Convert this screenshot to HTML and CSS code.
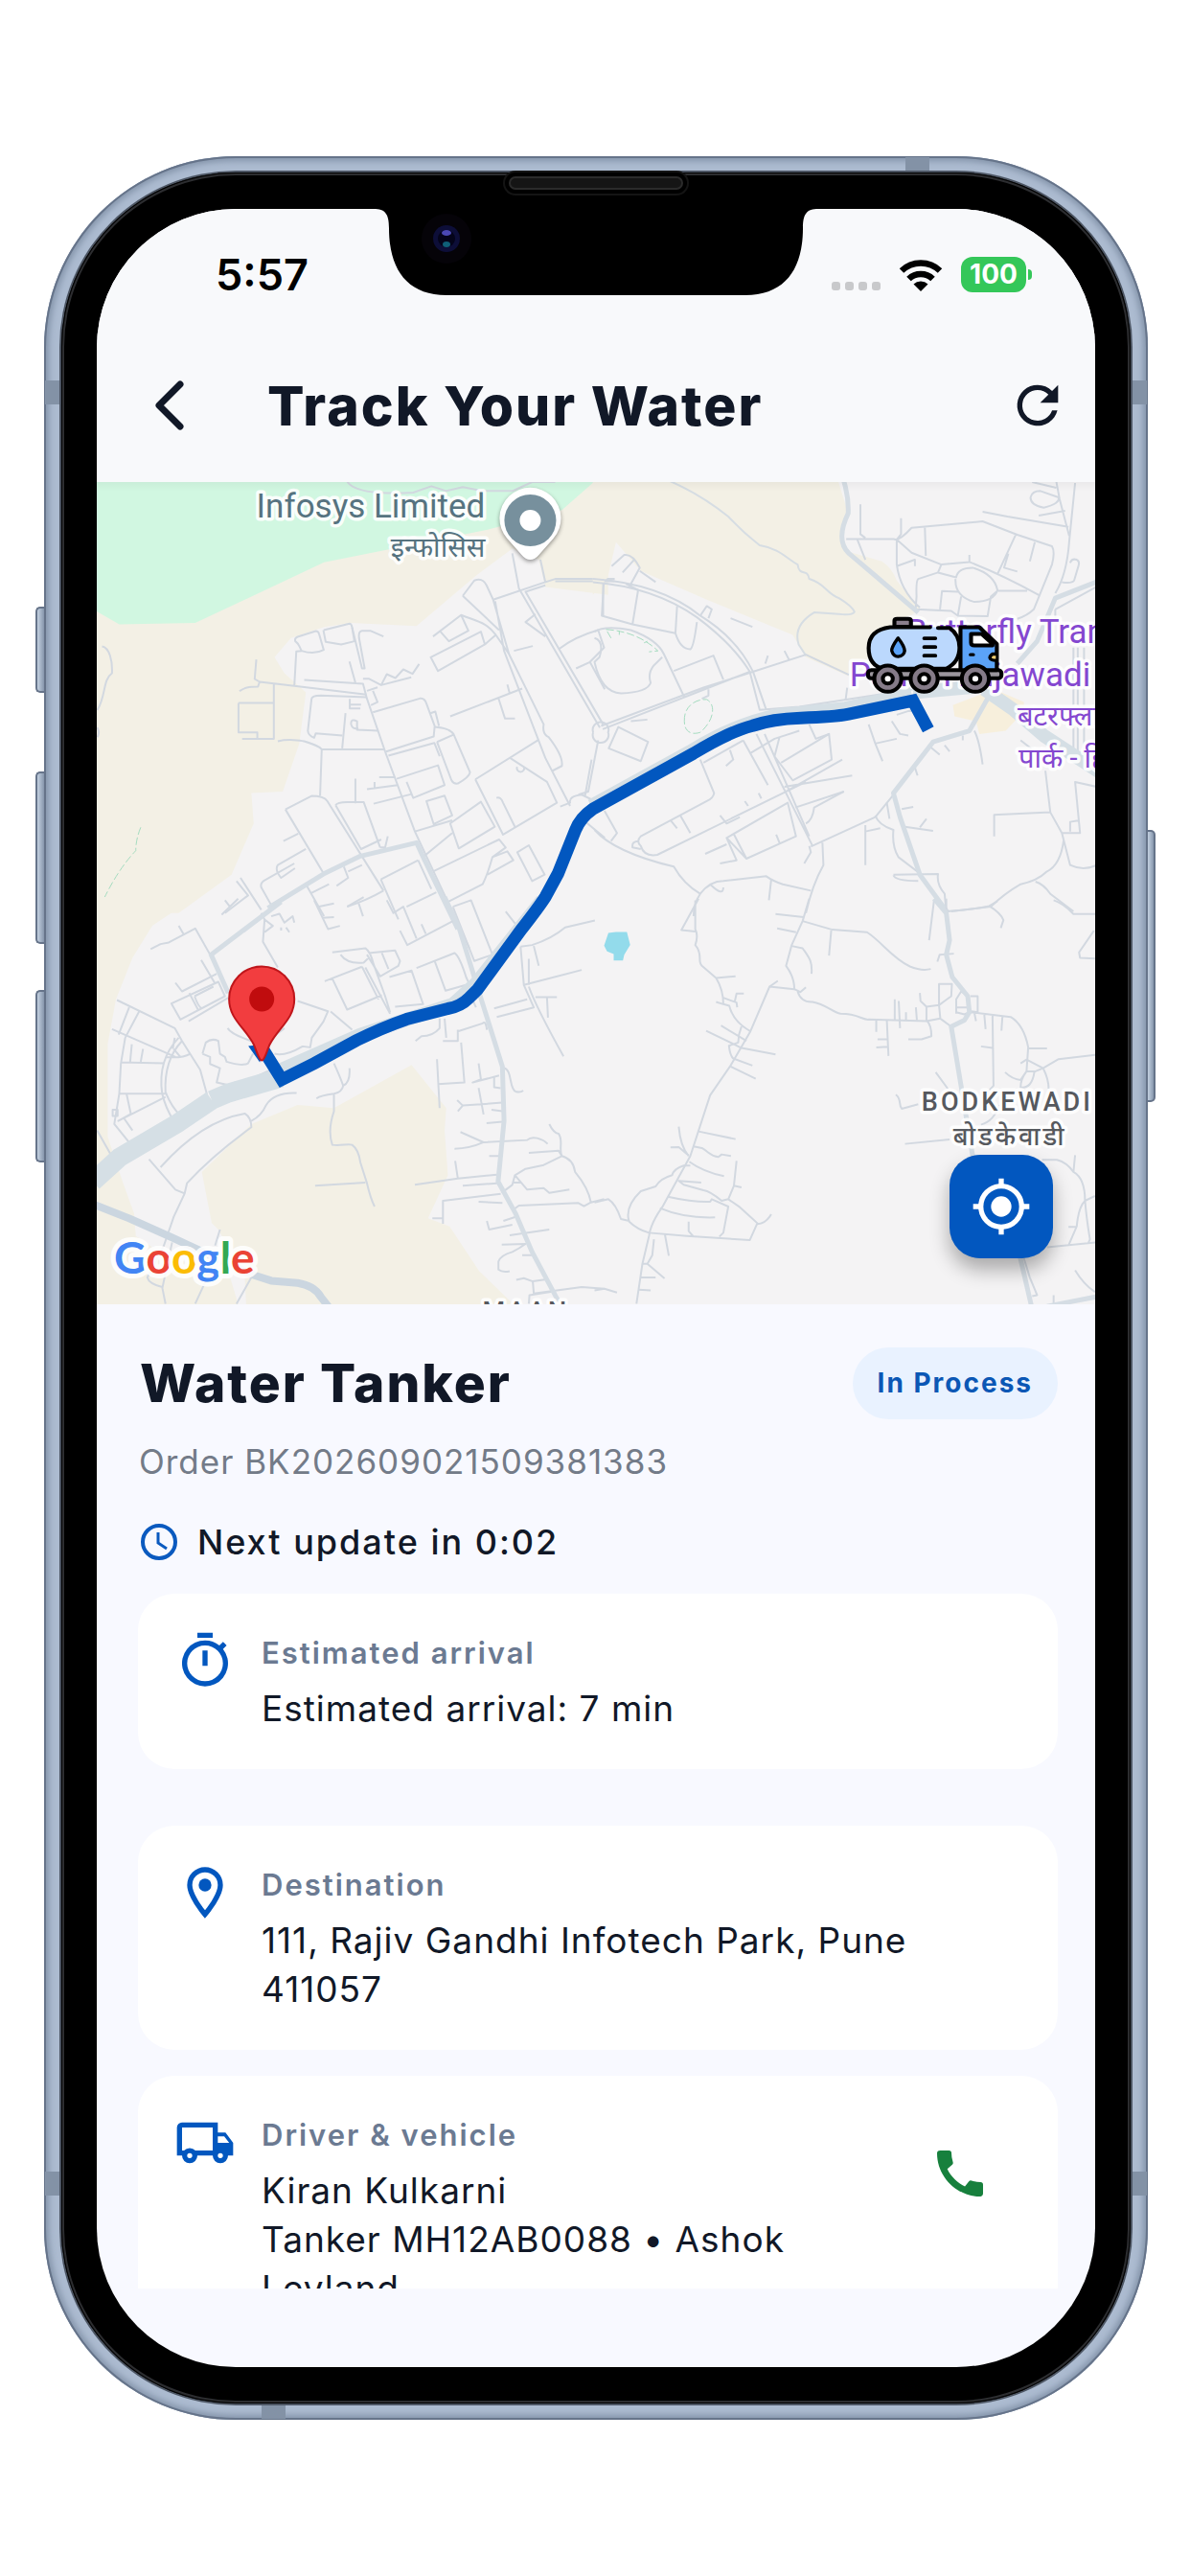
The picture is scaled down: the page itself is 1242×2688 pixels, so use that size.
FILE: index.html
```
<!DOCTYPE html>
<html lang="en">
<head>
    <meta charset="UTF-8">
    <meta name="viewport" content="width=device-width, initial-scale=1.0">
    <title>Track Your Water</title>
    <link rel="stylesheet" href="styles.css">
</head>
<body>
    <div class="phone">
        <span class="side-btn mute"></span>
        <span class="side-btn vol-up"></span>
        <span class="side-btn vol-down"></span>
        <span class="side-btn power"></span>
        <span class="band band-top"></span>
        <span class="band band-bottom"></span>
        <span class="band band-left"></span>
        <span class="band band-right"></span>
        <span class="band band-left low"></span>
        <span class="band band-right low"></span>
        <div class="bezel">
            <span class="speaker"></span>
            <div class="screen">
                <svg class="notch" viewBox="0 0 464 90" aria-hidden="true">
                    <path d="M0 0C12 0 16 5 16 20C16 62 34 90 76 90H388C430 90 448 62 448 20C448 5 452 0 464 0Z"/>
                    <circle cx="76" cy="31" r="26" fill="#050308"/>
                    <circle cx="76" cy="31" r="14" fill="#0d0e38"/>
                    <circle cx="76" cy="31" r="9" fill="#04041a"/>
                    <ellipse cx="76" cy="25" rx="5" ry="3" fill="#4a48b4"/>
                    <ellipse cx="76" cy="37" rx="4" ry="3" fill="#0f5f78"/>
                </svg>

                <div class="status-bar">
                    <span class="time">5:57</span>
                    <div class="status-icons">
                        <span class="signal"><i></i><i></i><i></i><i></i></span>
                        <svg class="wifi" viewBox="0 0 46 34" aria-hidden="true">
                            <path d="M23 34L15.500 26.500A11 11 0 0 1 30.500 26.500Z"/>
                            <path d="M10.500 21A18 18 0 0 1 35.500 21M3 12.500A29 29 0 0 1 43 12.500" fill="none" stroke="#000" stroke-width="6.500"/>
                        </svg>
                        <span class="battery">100</span>
                    </div>
                </div>

                <header class="app-bar">
                    <button class="icon-btn" aria-label="Back">
                        <svg viewBox="0 0 64 64"><path d="M43 10L21 32L43 54" fill="none" stroke="currentColor" stroke-width="7" stroke-linecap="round" stroke-linejoin="round"/></svg>
                    </button>
                    <h1>Track Your Water</h1>
                    <button class="icon-btn" aria-label="Refresh">
                        <svg viewBox="0 0 24 24"><path d="M17.650 6.350A7.960 7.960 0 0 0 12 4a8 8 0 1 0 7.730 10h-2.080A6 6 0 1 1 12 6c1.660 0 3.140.69 4.220 1.780L13 11h7V4z"/></svg>
                    </button>
                </header>

                <div class="map">
                    <svg class="map-canvas" viewBox="0 0 1041 857" role="img" aria-label="Map of the route">
                        <!-- north west -->
                        <g class="tile" transform="translate(-11 -14) scale(.3444 .3333)">
                            <path class="sand" d="M20 30H1580V395L1390 370L1370 285L1290 250L1180 335L1000 492L800 483L720 495L620 530L570 590L600 640L665 700L645 860L595 1010L500 1015L507 1110L440 1270L280 1390H20Z"/>
                            <path class="park" d="M20 30H1550L1440 130L1220 190L920 252L720 293L330 483L100 487L20 440Z"/>
                            <path class="road" d="M790 40C810 75 900 80 990 75L1045 55L1090 70L1140 58L1200 70H1290L1350 42H1420"/>
                            <path class="road" d="M48 556C70 560 80 600 78 640C50 660 60 710 34 755M34 810Q42 825 34 840"/>
                            <path class="road" d="M515 597L510 658L525 667L520 682C490 682 480 685 464 696M525 667L630 680L848 707M461 733H568M568 675V845H472M461 733V825H518V845M580 853C610 845 650 850 660 853C690 863 705 868 713 878H905M630 680L636 572L652 570C640 545 645 550 633 540Q630 530 640 526L695 508Q703 508 705 517L719 567Q690 583 652 570M719 505L797 485Q803 485 805 497L812 540L772 550L725 542L718 505"/>
                            <path class="road" d="M805 497L835 625L843 625L826 530Q824 508 835 507H860L900 525M797 603L815 670M660 661L838 673L850 720L905 885L995 1135L1160 1500M838 657H855L893 677L910 643L936 655L960 628L988 642L1008 611M893 677L984 653M850 695L882 684M868 695L882 730L862 740"/>
                            <path class="road" d="M850 715L710 710Q682 710 682 722L671 820Q672 835 690 842L695 828L775 835M798 720V750H830M798 738H832M785 765L775 875M885 820L820 817V790Q800 780 802 800Q806 817 824 812M868 762L1010 719Q1025 717 1030 735L1055 805L1052 838L908 885M1042 765L1057 760L1068 805M1055 808Q1100 812 1112 830L1162 950Q1160 965 1125 985Q1112 987 1106 975L1062 855M1062 855L1112 832M915 898L1054 858L1070 900"/>
                            <path class="road" d="M940 970L1065 928L1085 990L990 1030L970 980M850 1003L943 990M873 980V1003M887 965H935M870 1048L985 1018M815 970V1047M713 878L708 1023M603 1066L682 1024Q720 1024 730 1040L900 1320M603 1066L718 1265M755 1053Q760 1043 790 1043H840L890 1185M755 1053L832 1190L893 1160M890 1185L905 1185L913 1150"/>
                            <path class="road" d="M1030 1040L1085 1023L1108 1085L1052 1112ZM995 1135L1108 1100M1102 1110L1195 1042L1237 1120L1128 1188ZM1020 1215L1108 1140M1050 1260L1250 1160L1270 1185L1230 1215Q1215 1270 1200 1300L1095 1355M1230 1215L1275 1197L1293 1225L1215 1270M1305 1200L1340 1178L1388 1270L1350 1290Z"/>
                            <path class="road" d="M1178 972L1370 848M1178 972L1262 1145L1425 1045L1395 980L1283 905M1242 1030Q1255 1025 1262 1045L1300 1125M1305 933A11 11 0 1 0 1325 933M1102 775L1320 688M1248 718L1268 782H1298M1275 675L1282 703M1295 570L1352 555"/>
                            <path class="road" d="M1290 265L1310 375L1555 810M1375 285L1390 355L1232 410M1390 365L1330 385L1565 800M1232 410L1280 580L1385 800Q1380 830 1400 840Q1445 900 1440 930L1412 945M1238 415L1265 570L1390 905L1465 1055M1140 398L1175 350Q1200 340 1212 365L1232 410M1140 398L1250 505M1043 590L1195 510L1207 550L1065 633ZM1050 525L1135 458L1157 507L1098 540L1070 507M1135 458C1190 480 1210 480 1240 520L1280 580M1207 550L1240 520M1360 455L1330 480L1390 525"/>
                            <path class="road" d="M1390 355L1420 345H1600M1420 352H1600M1430 565Q1480 525 1550 505L1568 560L1525 605L1483 625M1525 605L1570 690M1565 360V460M1535 825A24 24 0 1 0 1580 825A24 24 0 1 0 1535 825M1550 850L1520 1010L1490 1020M1530 910L1510 1025M1435 1057L1465 1045Q1460 1025 1500 1020L1540 1040M1500 1095L1570 1155"/>
                            <path class="road" d="M665 1190L580 1240Q570 1255 590 1280L632 1250M597 1165L642 1142M560 1365L530 1310Q525 1295 545 1285L630 1235M665 1300L720 1400M680 1328L735 1300M780 1245L793 1280L758 1305M793 1260L835 1240M900 1320Q850 1350 790 1370M892 1285L1005 1225M892 1285L945 1410M1005 1225L1045 1315M455 1290L490 1335L420 1390M467 1280L530 1380M1060 1325L970 1370"/>
                            <path class="street" d="M550 1375L718 1268L830 1212L1000 1170L1020 1215L1125 1440"/>
                            <path class="trail" d="M165 1122Q150 1160 150 1195Q90 1260 40 1375"/>
                        </g>
                        <!-- north east -->
                        <g class="tile" transform="translate(519 -14) scale(.3444 .3333)">
                            <path class="sand" d="M-5 30H735L765 130L745 200L770 260L870 290Q900 310 915 350L985 440L930 480L830 590L770 650L640 590L600 520L340 410L140 320L65 230L40 340L-5 395Z"/>
                            <path d="M1085 740L1210 690L1300 730V760L1245 820L1165 830L1155 790L1090 775Z" fill="#f7efdc"/>
                            <path class="road thin" d="M230 40Q320 80 405 150Q450 200 500 240C560 250 580 280 615 300C620 340 645 310 650 345C700 360 700 390 740 405Q780 430 787 448Q780 460 740 455L665 450Q600 490 618 550L640 585"/>
                            <path class="road" d="M805 112V205L820 217M928 155V205L915 222M762 220H905Q920 230 960 185L1175 165L1280 207L1385 243Q1395 260 1385 300L1330 440Q1310 460 1280 470M1000 180L1003 273M795 220L820 285M915 222V300Q925 380 985 435M915 222L960 263L1050 300L1135 292Q1230 330 1345 395M915 305L970 285V305M1135 270V292M1275 207L1220 330M1253 265L1240 310L1280 322M1333 230L1318 290M1050 300L1040 325L980 345Q973 350 975 400L972 440L1080 445L1100 460L1190 462L1200 400L1220 382H1310M1040 325L1095 340Q1100 310 1145 310Q1210 330 1220 380Q1210 415 1150 417Q1090 400 1093 345M1100 385L1052 383L1046 440M1110 400L1100 460"/>
                            <path class="road" d="M1175 135L1250 150L1435 182M1398 40L1408 95L1437 210M1325 42L1398 60M1320 90Q1325 70 1350 70L1405 90Q1410 110 1360 122Q1320 115 1320 90M1345 147L1425 132M1440 295Q1445 280 1460 285Q1470 290 1465 305L1452 350Q1445 360 1415 355M1455 45L1437 230Q1430 330 1395 390"/>
                            <path class="road" d="M28 358L22 460L115 487L245 515M132 380L115 487M132 380L95 360M250 430L245 515Q260 565 290 565Q300 560 310 480M320 460L340 430L355 440L345 468M52 305L90 270Q115 265 137 310L105 370M85 325L120 285M137 320L185 355M0 510Q30 490 110 505Q190 535 210 580L272 715M0 530Q30 540 15 590L0 605Q20 700 80 703Q160 700 170 670Q160 640 180 615L205 590M240 633L360 585L390 660M412 468L478 495"/>
                            <path class="road" d="M-5 345Q200 360 320 460Q430 530 480 635L520 755M-5 355Q180 370 310 465Q420 550 470 635L500 755L620 745L965 690M20 805L330 685L640 582L770 645M25 815L470 635M575 570L590 600M525 585L517 610M325 720L345 710V690M72 808L162 855L140 915L43 875Z"/>
                            <path class="road" d="M110 790L160 785M320 910L362 1015Q360 1030 340 1040L140 1150Q125 1165 140 1180Q150 1215 190 1208L640 980M140 1190L115 1185Q112 1165 135 1165M450 850L525 990M450 850L330 920M410 880L420 910L398 930M472 890L545 845L620 820M565 920L710 830L718 910L600 975L545 900L560 840M575 995L780 960M490 830L660 1180M515 830L650 1150M608 1060L755 1010M580 1010L750 910M230 1100L250 1125M260 1085L290 1140M380 1085L400 1110L440 1090M455 1040L465 1055M497 1015L505 1032M400 1155L585 1045L610 1150L460 1220L400 1155L430 1225L380 1235M420 1140L460 1220M550 1145L560 1170M335 1205L400 1175"/>
                            <path class="road" d="M0 1130Q60 1200 240 1245Q270 1300 320 1330Q300 1360 300 1400M320 1330Q350 1290 390 1290L520 1275Q540 1290 570 1300L655 1320M535 1285L528 1350M390 1310Q390 1340 350 1300M650 1180L655 1200L635 1235M655 1182L850 1090L905 1020M690 1170L693 1240Q660 1300 640 1390M30 1070L68 1140L50 1165M640 1110Q660 1100 665 1060L755 1010"/>
                            <path class="road" d="M900 790L925 830L950 835M915 770L960 755L975 780M830 800L850 860L872 915M850 860L915 845M650 800L670 845L710 830M765 685L760 725M1150 820Q1165 850 1175 925M1115 835V850M1060 865L1075 885M1010 865L1045 895M970 935L978 960M885 1045L893 1095M930 1065L965 1058M940 1120L1025 1133M985 1122L1005 1095M850 1085Q860 1115 905 1130Q900 1180 920 1215L990 1270M905 1272Q910 1290 980 1290M820 1115V1240M820 1135L865 1125M905 1270L1040 1268Q1035 1300 1060 1330L1065 1390"/>
                            <path class="road" d="M1210 1150V1083L1380 1075L1415 1140L1440 1240Q1480 1260 1520 1240M1365 945L1380 1075M1415 1140H1470L1455 980L1520 995M1440 1135V1105L1468 1100M1420 1165Q1410 1240 1370 1260Q1340 1290 1290 1300Q1240 1330 1200 1370L1080 1385M1335 1292Q1360 1300 1380 1330L1450 1385M1395 440L1520 370M1395 440V470M1450 560V900M1463 560V900M1482 560V930M1290 850L1340 890"/>
                            <path class="street" d="M755 40Q770 90 768 140C740 200 745 240 770 265L850 335L980 450M1530 350L1395 405L1340 540L1280 610M1195 710L1135 820L1025 855L905 1015L925 1090L985 1270L1070 1390"/>
                            <path class="highway" d="M965 700L1180 680M1180 690L1270 755L1360 835L1530 950"/>
                            <path class="highway" d="M-10 1055L290 885Q420 800 560 770L760 750L960 705"/>
                            <path class="trail" d="M35 503Q130 510 192 570L165 573M75 508V520M50 530L35 503M160 540L150 545M272 790C270 740 310 720 340 722C370 740 360 790 320 825C290 835 272 820 272 790"/>
                        </g>
                        <!-- south west -->
                        <g class="tile" transform="translate(-11 436) scale(.3444 .3333)">
                            <path class="sand" d="M20 -10H330L200 80L140 180L90 310L65 450V740L110 880L145 980L150 1050L250 1120L430 1160L465 1280H20Z"/>
                            <path class="sand" d="M350 850L500 700L640 640L750 650L985 515L1090 650L1085 720L1095 860L1035 995L1100 1020L1190 1160L1310 1280H485L480 1180L400 1030L380 1010Z"/>
                            <path class="road" d="M195 153L225 137L250 132L330 88L375 170M280 80L295 107M348 187L390 260M270 258L290 285L395 230M258 323L400 255L420 300L285 373ZM328 300L385 270M328 300Q340 335 350 338L420 300M312 290L340 345M310 378L430 305"/>
                            <path class="road" d="M93 312L268 400L290 440L345 530L365 605L275 680M78 403L270 490M130 335L98 420M160 348L118 430M118 430L105 510L100 605L85 700L140 770M138 450L133 505M172 465L165 505M105 507L237 510M102 605H245M122 605L135 668L97 690L240 615M115 683L140 720M80 655H95V675H80ZM280 430Q215 500 230 605Q240 650 265 690M290 440Q235 500 240 600Q260 650 285 672M240 490Q290 495 315 480M265 465L285 490M268 430L262 465"/>
                            <path class="road" d="M352 480L362 445Q380 430 400 440L405 480L420 490L425 505Q470 520 490 510L505 480M352 480L375 490V512L405 525L395 570L440 580L450 570L480 568L560 530M428 400Q440 420 500 440M640 315L732 347L718 380L683 430L678 460L655 457Q600 490 570 480M740 348L805 405M575 420L600 400M530 40L540 60L535 130L580 210M540 60L565 80L540 100M560 50L585 42L600 70L625 50L630 70M590 85V95M605 85L615 100"/>
                            <path class="road" d="M690 0L732 90L768 80M705 20L750 10M715 55L750 53M790 20L840 -10M825 10L838 50M410 45L460 -5M420 0L435 20M745 163L845 150Q860 160 870 200L905 300L920 350M770 170Q790 200 840 195L855 180M845 210L920 355M855 165L935 157L950 190L945 205L890 238L850 170M895 165L915 215M722 253L835 208M745 245L790 342L895 297M835 208L885 310M918 240L985 220L1020 325L935 333M1000 212L1115 165Q1130 175 1150 240L1160 262L1088 283L1055 190M910 0L930 40L960 20L1000 120M950 95L972 140L1110 65M1015 75L1028 105"/>
                            <path class="road" d="M1110 20L1165 0L1230 170L1175 190L1110 20M1270 35L1300 75M1315 145L1350 140Q1410 120 1450 85L1540 63M1315 145L1325 265L1500 218M1340 183V265M1325 265L1355 335L1243 365M1235 338L1335 310M1340 270Q1360 330 1445 488M1360 303H1425M1395 305L1398 367M1355 143L1370 205M1165 300L1180 335M1085 370L1090 430M997 440L1015 425Q1050 425 1070 400V370M1125 410L1200 385Q1210 375 1213 405M1080 440H1125V405M1135 445L1145 570L1065 575M1062 497L1070 650"/>
                            <path class="road" d="M750 510Q770 555 778 580Q800 570 797 525M697 620Q710 610 750 605Q775 600 778 580M750 605V660Q730 720 745 765C770 770 790 760 805 765Q825 780 830 820L850 885Q860 930 873 958M693 893L845 883M637 603Q570 600 545 640Q530 675 500 690M33 720L85 815M190 810L270 905L298 917L305 885Q380 800 500 710Q500 680 480 667Q350 690 225 835M298 917L265 990L235 1080L185 1180Q190 1200 230 1210L240 1262M405 1030L390 1080M330 1262L380 1150M455 1262L500 1180M260 1070L230 1215"/>
                            <path class="road" d="M1188 510L1195 560L1170 570L1250 548M1235 550V585L1255 588M1265 525C1290 530 1280 590 1300 598Q1315 602 1323 595M1188 587L1203 670M1140 642L1260 633M1123 625L1140 642L1125 660M1227 655L1260 660M1212 697L1260 693M1133 725L1203 757L1335 750C1350 735 1380 745 1397 762M1115 777Q1160 777 1203 757M1220 800H1255M1117 815L1125 870L1243 858M995 890L1125 870M1140 893L1245 885M1080 1012V940L1255 918M1048 995H1078M1188 943L1260 947"/>
                            <path class="road" d="M1402 700Q1415 728 1430 730C1445 750 1430 780 1440 800L1385 828L1330 840L1298 860L1290 890L1258 915M1340 790L1430 783L1440 800Q1475 810 1480 850Q1520 900 1528 945L1507 957L1490 947L1310 955L1290 970M1298 860L1335 905L1385 900L1402 915L1463 905M1290 883H1315M1528 945L1568 935M1213 1003L1220 1030L1290 1015M1263 1003L1300 990M1282 1048L1402 1030M1258 1077L1330 1075Q1310 1090 1290 1100Q1255 1110 1248 1130V1155Q1260 1165 1282 1160M1302 1187L1325 1182L1352 1192L1398 1185M1352 1192L1355 1230L1500 1210L1568 1215M1340 1262L1342 1235L1425 1222M1320 1110L1350 1110"/>
                            <path class="street" d="M590 5L378 170L430 290M1085 -10L1130 90L1190 290L1260 520L1265 690L1247 880L1300 980L1350 1100L1430 1255"/>
                            <path class="highway wide" d="M380 625L280 695L100 805L20 880M380 625L430 603L590 555"/>
                            <path class="highway" d="M590 530L830 420L1110 325L1180 260L1380 0"/>
                            <path class="street canal" d="M20 950L130 995L260 1055L500 1170L560 1190L640 1197Q690 1205 710 1240L740 1280"/>
                        </g>
                        <!-- south east -->
                        <g class="tile" transform="translate(519 436) scale(.3444 .3333)">
                            <path d="M42 102L65 99H98L108 140L90 170L86 188H58V168L38 160L29 142Z" fill="#93dbeb"/>
                            <path class="road" d="M315 -5L263 93L305 98M305 0V90Q315 110 305 140C330 170 310 190 325 205L368 243Q390 280 390 325L408 330Q420 380 472 410M368 243L427 238M368 318L390 325M390 305L430 320L432 335M452 292H430L425 315M650 -5L630 65L597 140L580 205Q605 240 605 278L530 270L472 410L410 520L350 610L290 800L205 960Q170 1010 165 1050L145 1137L127 1262"/>
                            <path class="road" d="M548 43L633 53M553 88L610 100M630 65L720 92L825 100C870 130 900 180 955 207Q990 222 1018 215M717 90L710 173M597 143L630 150C650 180 660 190 657 230M530 270L555 252M605 278L623 287L640 272M615 285Q625 320 660 318C700 325 720 350 745 355C800 355 810 375 830 373L1005 378L1047 370M338 408L445 462L548 482M383 392L460 440M445 395Q435 420 435 445L407 455Q410 485 420 495L478 517M412 520L488 558"/>
                            <path class="road" d="M853 375V412M885 375L890 487M857 435H887M853 460L887 458M909 310V375M921 315L925 400M943 350V375M973 335L976 375M985 290L987 315L1005 333L1043 328M1005 333V375Q1020 390 1020 425L990 435H950M1043 328V262H1082L1080 300L1060 315L1043 328L1047 370L1080 395M1095 355V310L1110 285L1130 300M1095 335H1135M1095 350L1120 357L1135 350M1138 300H1160V350L1137 347M1028 0L1013 125M1065 -5V35Q1140 30 1195 18Q1230 40 1238 62L1230 87M1195 18L1220 3M1088 167L1045 170L1038 192M1390 0Q1420 10 1450 43H1520M1512 95L1467 163L1470 180L1515 182"/>
                            <path class="road" d="M1137 350L1260 365Q1300 390 1313 460L1308 535Q1290 560 1290 585Q1325 590 1332 535M1313 463H1370M1150 352L1155 378M1180 357L1184 403M1205 360L1208 580L1190 600M1235 363L1232 408M1170 457L1205 462M1290 510L1308 498L1358 525L1335 535H1308L1290 562Q1265 560 1243 538M1358 525L1405 497L1520 483M1358 525Q1375 560 1375 590M1033 538L1070 590M912 608C930 620 920 640 930 652L980 638M940 762L1075 748M1225 640Q1210 690 1170 702"/>
                            <path class="road" d="M255 708Q260 770 285 800M230 773L255 772L285 798M315 723L427 747M300 770L325 775C350 790 350 800 375 803L385 795L413 800M287 818Q330 850 392 863M290 830H270Q240 840 235 860Q200 870 185 895L140 910Q90 960 105 1005Q130 1030 165 1040L280 1050L470 1063L493 1010L440 960L405 935L385 940Q350 910 330 907L270 890L255 878L323 883M430 815L422 893L405 935M422 893L445 898M222 927Q300 945 350 943L355 935L405 958L390 1040L378 1052M198 963Q270 995 365 992M493 1013Q520 1010 535 982M285 1005V1035L298 1050M0 945L42 935Q65 950 80 997L105 1003M180 1060L175 1110L160 1137H145M213 1045L225 1112M160 1137L212 1183M138 1180H185M133 1218L170 1220M0 1220L30 1215L68 1227"/>
                            <path class="road" d="M1355 812H1400Q1430 820 1450 850L1455 797M1450 850Q1485 870 1485 940Q1465 960 1460 1020L1435 1080M1485 940L1515 925M1485 940Q1490 1000 1500 1060L1495 1072M1435 1022H1458M1370 1085L1520 1070M1455 1157Q1480 1200 1515 1225M1390 1235V1262M1300 1120L1318 1180L1340 1235L1325 1238"/>
                            <path class="street" d="M1028 -5L1065 40L1075 125L1065 170L1083 240L1130 300L1135 350L1120 375L1080 395L1145 800L1285 1100L1323 1270M1370 1270L1530 1238"/>
                        </g>

                        <polygon points="158,588 176,586 170,605" fill="#0257bf"/>
                        <path class="route" d="M170 586L193 623L227 606L271 582Q297 569 323 560L366 549Q379 547 388 538L397 529L443 466Q461 443 468 432L481 408L499 363Q504 350 517 341L622 283Q660 260 684 254Q704 247 734 246Q769 245 784 242L851 228L867 258"/>

                        <g class="place place-gray">
                            <text x="405" y="37" class="latin" text-anchor="end">Infosys Limited</text>
                            <text x="405" y="78" class="hindi" text-anchor="end">इन्फोसिस</text>
                        </g>
                        <path class="poi" d="M452 81Q447 81 443 76L428 59A32 32 0 1 1 476 59L461 76Q457 81 452 81Z"/>
                        <circle cx="452" cy="40" r="27" fill="#77909d"/>
                        <circle cx="452" cy="40" r="11" fill="#fff"/>

                        <g class="place place-purple">
                            <text x="844" y="168" class="latin">Butterfly Transport</text>
                            <text x="785" y="213" class="latin">Park - Hinjawadi</text>
                            <text x="960" y="254" class="hindi">बटरफ्लाय</text>
                            <text x="961" y="298" class="hindi">पार्क - हिंजवडी</text>
                        </g>
                        <g class="place town">
                            <text x="860" y="655">BODKEWADI</text>
                            <text x="893" y="691">बोडकेवाडी</text>
                            <text x="402" y="874">MAAN</text>
                        </g>
                        <text x="18" y="825" class="google"><tspan fill="#4285f4">G</tspan><tspan fill="#ea4335">o</tspan><tspan fill="#fbbc05">o</tspan><tspan fill="#4285f4">g</tspan><tspan fill="#34a853">l</tspan><tspan fill="#ea4335">e</tspan></text>

                        <path d="M172 603C169 603 167 594 164 587C155 569 138 560 138 539A34 34 0 0 1 206 539C206 560 189 569 180 587C177 594 175 603 172 603Z" fill="#f23d3f" stroke="#bf161b" stroke-width="2"/>
                        <circle cx="172" cy="539" r="13" fill="#c00c0e"/>

                        <!-- tanker -->
                        <g transform="translate(519 -14) scale(.3444 .3333)" stroke="#000" stroke-width="12" stroke-linecap="round" stroke-linejoin="round">
                            <rect x="828" y="630" width="404" height="26" rx="10" fill="#9b969d"/>
                            <path d="M908 495V476Q908 470 916 470H950Q958 470 958 476V495Z" fill="#8a7f8d"/>
                            <path d="M895 496H1045Q1105 510 1105 560Q1105 610 1060 626H895Q830 615 830 561Q830 505 895 496Z" fill="#bbd8fd" stroke="none"/>
                            <path d="M1016 496H895Q830 505 830 561Q830 615 875 626H1065Q1105 605 1105 560Q1105 520 1075 498H1040" fill="none"/>
                            <path d="M1108 496H1165L1218 548V630H1108Z" fill="#5ba3f8"/>
                            <path d="M1140 517H1172L1205 548V553H1150Q1140 553 1140 545Z" fill="#fff"/>
                            <path d="M1138 582H1147M1215 580H1205Q1197 585 1197 592Q1200 600 1215 600" fill="#f4cf73" stroke-width="10"/>
                            <path d="M919 530Q898 560 900 570Q905 588 919 588Q937 586 939 570Q938 555 919 530Z" fill="#5ba3f8" stroke-width="10"/>
                            <path d="M998 531H1032M998 558H1032M998 585H1032M1065 657H1100" stroke-width="11"/>
                            <g fill="#857b88">
                                <circle cx="888" cy="657" r="41"/>
                                <circle cx="998" cy="657" r="41"/>
                                <circle cx="1153" cy="657" r="41"/>
                            </g>
                            <g fill="#fff">
                                <circle cx="888" cy="657" r="15"/>
                                <circle cx="998" cy="657" r="15"/>
                                <circle cx="1153" cy="657" r="15"/>
                            </g>
                        </g>
                    </svg>
                    <button class="locate-btn" aria-label="My location">
                        <svg viewBox="0 0 24 24"><path d="M12 8a4 4 0 1 0 0 8 4 4 0 0 0 0-8zm8.940 3A8.990 8.990 0 0 0 13 3.060V1h-2v2.060A8.990 8.990 0 0 0 3.060 11H1v2h2.060A8.990 8.990 0 0 0 11 20.940V23h2v-2.060A8.990 8.990 0 0 0 20.940 13H23v-2zM12 19a7 7 0 1 1 0-14 7 7 0 0 1 0 14z"/></svg>
                    </button>
                </div>

                <main class="details">
                    <div class="title-row">
                        <h2>Water Tanker</h2>
                        <span class="badge">In Process</span>
                    </div>
                    <p class="order">Order BK202609021509381383</p>
                    <div class="next-update">
                        <svg viewBox="0 0 40 40" fill="none" stroke="#0b5abf" aria-hidden="true"><circle cx="20" cy="20" r="17" stroke-width="4"/><path d="M19 10V21L28 27" stroke-width="3"/></svg>
                        <span>Next update in 0:02</span>
                    </div>

                    <section class="card card-eta">
                        <svg class="card-icon" viewBox="0 0 24 24" aria-hidden="true"><path d="M15 1H9v2h6zm-4 13h2V8h-2zm8.030-6.610l1.420-1.420a11 11 0 0 0-1.410-1.410l-1.420 1.420A8.960 8.960 0 0 0 12 4a9 9 0 1 0 7.030 3.390zM12 20a7 7 0 1 1 0-14 7 7 0 0 1 0 14z"/></svg>
                        <div class="card-text">
                            <h3>Estimated arrival</h3>
                            <p>Estimated arrival: 7 min</p>
                        </div>
                    </section>

                    <section class="card">
                        <svg class="card-icon" viewBox="0 0 24 24" aria-hidden="true"><path d="M12 2a7 7 0 0 0-7 7c0 5.250 7 13 7 13s7-7.750 7-13a7 7 0 0 0-7-7zM7 9a5 5 0 0 1 10 0c0 2.880-2.880 7.190-5 9.880C9.920 16.210 7 11.850 7 9z"/><circle cx="12" cy="9" r="2.500"/></svg>
                        <div class="card-text">
                            <h3>Destination</h3>
                            <p>111, Rajiv Gandhi Infotech Park, Pune 411057</p>
                        </div>
                    </section>

                    <section class="card">
                        <svg class="card-icon" viewBox="0 0 24 24" aria-hidden="true"><path fill-rule="evenodd" d="M20 8h-3V4H3a2 2 0 0 0-2 2v11h2a3 3 0 0 0 6 0h6a3 3 0 0 0 6 0h2v-5zm-.5 1.500L21.460 12H17V9.500zM6 18a1 1 0 1 1 0-2 1 1 0 0 1 0 2zm2.220-3a3 3 0 0 0-4.440 0H3V6h12v9zM18 18a1 1 0 1 1 0-2 1 1 0 0 1 0 2z"/></svg>
                        <div class="card-text">
                            <h3>Driver &amp; vehicle</h3>
                            <p>Kiran Kulkarni<br>Tanker MH12AB0088 • Ashok Leyland</p>
                        </div>
                        <button class="call-btn" aria-label="Call driver">
                            <svg viewBox="0 0 24 24"><path d="M20.010 15.380a11.400 11.400 0 0 1-3.530-.56 1 1 0 0 0-1.010.24l-1.570 1.970c-2.830-1.350-5.480-3.900-6.890-6.830l1.950-1.660a1 1 0 0 0 .24-1.020 11.200 11.200 0 0 1-.56-3.530A1 1 0 0 0 7.650 3H4.190C3.650 3 3 3.240 3 3.990 3 13.280 10.730 21 20.010 21c.71 0 .99-.63.99-1.180v-3.450a1 1 0 0 0-.99-.99z"/></svg>
                        </button>
                    </section>
                </main>
            </div>
        </div>
    </div>
</body>
</html>
```
FILE: styles.css
```
* {
    box-sizing: border-box;
}
body {
    margin: 0;
    height: 100vh;
    padding: 163px 44px 163px 46px;
    background: #fff;
    color: #111827;
    font-family: Inter, "Noto Sans", sans-serif;
}
h1, h2, h3, p {
    margin: 0;
}
button {
    border: none;
    padding: 0;
    background: none;
    color: inherit;
    cursor: pointer;
}
button svg {
    display: block;
    width: 64px;
    height: 64px;
    fill: currentColor;
}

/* device frame */
.phone {
    position: relative;
    height: 100%;
    padding: 17px 18px;
    border-radius: 200px;
    background: #acbbd0;
    box-shadow: inset 0 0 0 2px #66748a, inset 0 0 6px 5px #8595ab;
}
.bezel {
    position: relative;
    height: 100%;
    padding: 38px 37px;
    border-radius: 182px;
    background: #000;
    box-shadow: 0 0 0 2px #4c5563, inset 0 0 0 1px #000, inset 0 0 0 3px #2c2d30;
}
.speaker {
    position: absolute;
    top: 4px;
    left: 50%;
    width: 182px;
    height: 14px;
    margin-left: -91px;
    border: 2px solid #2b2b2b;
    border-radius: 7px;
    background: #151515;
    box-shadow: 0 0 0 4px #000, 0 0 0 6px #141414;
}
.side-btn {
    position: absolute;
    left: -9px;
    width: 9px;
    border: 2px solid #66748a;
    border-right: none;
    border-radius: 5px 0 0 5px;
    background: linear-gradient(90deg, #c3d0e0, #8797ad);
}
.mute {
    top: 470px;
    height: 90px;
}
.vol-up {
    top: 642px;
    height: 180px;
}
.vol-down {
    top: 870px;
    height: 180px;
}
.power {
    top: 703px;
    left: auto;
    right: -8px;
    width: 8px;
    height: 284px;
    border-right: 2px solid #66748a;
    border-left: none;
    border-radius: 0 5px 5px 0;
}
.band {
    position: absolute;
    background: #8392a6;
}
.band-top, .band-bottom {
    top: 1px;
    right: 228px;
    width: 25px;
    height: 15px;
}
.band-bottom {
    top: auto;
    right: auto;
    bottom: 1px;
    left: 227px;
}
.band-left, .band-right {
    top: 234px;
    left: 1px;
    width: 15px;
    height: 25px;
}
.band-right {
    left: auto;
    right: 1px;
}
.low {
    top: auto;
    bottom: 234px;
}

.screen {
    position: relative;
    display: flex;
    flex-direction: column;
    height: 100%;
    padding-bottom: 82px;
    overflow: hidden;
    border-radius: 145px;
    background: #f8f9ff;
}
.notch {
    position: absolute;
    top: 0;
    left: 50%;
    width: 464px;
    margin-left: -232px;
}

.status-bar {
    display: flex;
    flex: none;
    justify-content: space-between;
    align-items: center;
    height: 125px;
    padding: 12px 66px 0 124px;
    background: #f8f9fb;
    color: #000;
}
.time {
    font-size: 45px;
    font-weight: 600;
}
.status-icons {
    display: flex;
    align-items: center;
    gap: 19px;
}
.signal {
    display: flex;
    gap: 5px;
    padding-top: 24px;
}
.signal i {
    width: 9px;
    height: 9px;
    border-radius: 3px;
    background: #c8c9cb;
}
.wifi {
    width: 46px;
    height: 34px;
}
.battery {
    position: relative;
    width: 68px;
    margin-right: 6px;
    border-radius: 12px;
    background: #34c759;
    color: #fff;
    font-size: 28px;
    font-weight: 700;
    line-height: 37px;
    text-align: center;
}
.battery::after {
    content: "";
    position: absolute;
    top: 13px;
    right: -6px;
    width: 4px;
    height: 11px;
    border-radius: 0 4px 4px 0;
    background: #34c759;
}

.app-bar {
    display: flex;
    flex: none;
    align-items: center;
    height: 160px;
    padding: 0 28px 0 44px;
    background: #f8f9fb;
}
.app-bar h1 {
    flex: 1;
    padding-left: 70px;
    font-size: 57px;
    font-weight: 800;
    letter-spacing: 2px;
}

/* map */
.map {
    position: relative;
    flex: none;
    background: #f4f3f4;
}
.map::after {
    content: "";
    position: absolute;
    top: 0;
    left: 0;
    width: 100%;
    height: 10px;
    background: linear-gradient(rgba(0, 0, 0, 0.04), transparent);
}
.map-canvas {
    display: block;
    width: 100%;
}
.tile path {
    vector-effect: non-scaling-stroke;
}
.sand {
    fill: #f3f0e5;
}
.park {
    fill: #d1f7e1;
}
.road, .street, .highway, .trail, .route {
    fill: none;
    stroke: #d2d8e0;
    stroke-width: 2px;
    stroke-linejoin: round;
}
.thin {
    stroke: #d6dde3;
}
.street {
    stroke: #d5dde4;
    stroke-width: 5px;
}
.canal {
    stroke: #cbd6e0;
    stroke-width: 8px;
}
.highway {
    stroke: #d5dfe5;
    stroke-width: 14px;
}
.wide {
    stroke-width: 20px;
}
.trail {
    stroke: #a5dcc0;
    stroke-width: 1px;
    stroke-dasharray: 8 3;
}
.route {
    stroke: #0257bf;
    stroke-width: 13px;
    stroke-linejoin: miter;
}
.poi {
    fill: #fff;
    filter: drop-shadow(0 2px 2px rgba(0, 0, 0, 0.4));
}
.place, .google {
    paint-order: stroke;
    stroke: rgba(255, 255, 255, 0.9);
    stroke-width: 7px;
    stroke-linejoin: round;
}
.place {
    font-family: Roboto, "Noto Sans Devanagari", "Noto Sans", sans-serif;
}
.place-gray {
    fill: #567380;
}
.place-purple {
    fill: #8447d0;
}
.latin {
    font-size: 35px;
}
.hindi {
    font-size: 29px;
}
.town {
    fill: #56595e;
    font-size: 27px;
    font-weight: 500;
    letter-spacing: 3px;
}
.google {
    font-family: Lato, sans-serif;
    font-size: 46px;
    font-weight: 700;
    stroke-width: 10px;
}
.locate-btn {
    position: absolute;
    right: 44px;
    bottom: 48px;
    padding: 22px;
    border-radius: 32px;
    background: #0257bf;
    color: #fff;
    box-shadow: 0 12px 20px rgba(0, 0, 0, 0.3);
}

/* order details */
.details {
    flex: 1;
    min-height: 0;
    padding: 45px 39px 0 43px;
    overflow: auto;
    scrollbar-width: none;
}
.title-row {
    display: flex;
    justify-content: space-between;
    align-items: center;
}
.title-row h2 {
    padding-left: 2px;
    font-size: 55px;
    font-weight: 800;
    line-height: 75px;
    letter-spacing: 2px;
}
.badge {
    padding: 0 26px;
    border-radius: 38px;
    background: #e9f2ff;
    color: #0b57b5;
    font-size: 28px;
    font-weight: 700;
    line-height: 75px;
    letter-spacing: 2px;
}
.order {
    margin-top: 19px;
    padding-left: 1px;
    color: #737b88;
    font-size: 35px;
    line-height: 50px;
    letter-spacing: 1px;
}
.next-update {
    display: flex;
    align-items: center;
    gap: 20px;
    margin: 34px 0 28px;
    padding-left: 2px;
    font-size: 36px;
    font-weight: 500;
    line-height: 51px;
    letter-spacing: 2px;
}
.next-update svg {
    width: 40px;
    height: 40px;
}
.card {
    display: flex;
    align-items: flex-start;
    margin-bottom: 27px;
    padding: 38px;
    border-radius: 38px;
    background: #fff;
}
.card-eta {
    margin-bottom: 59px;
}
.card-icon {
    flex: none;
    width: 64px;
    height: 64px;
    margin-right: 27px;
    fill: #0257bf;
}
.card-text {
    flex: 1;
}
.card-text h3 {
    margin-bottom: 9px;
    color: #6b7a92;
    font-size: 31px;
    font-weight: 600;
    line-height: 47px;
    letter-spacing: 2px;
}
.card-text p {
    font-size: 37px;
    line-height: 51px;
    letter-spacing: 1px;
}
.call-btn {
    padding: 32px;
    color: #17803d;
}
```
